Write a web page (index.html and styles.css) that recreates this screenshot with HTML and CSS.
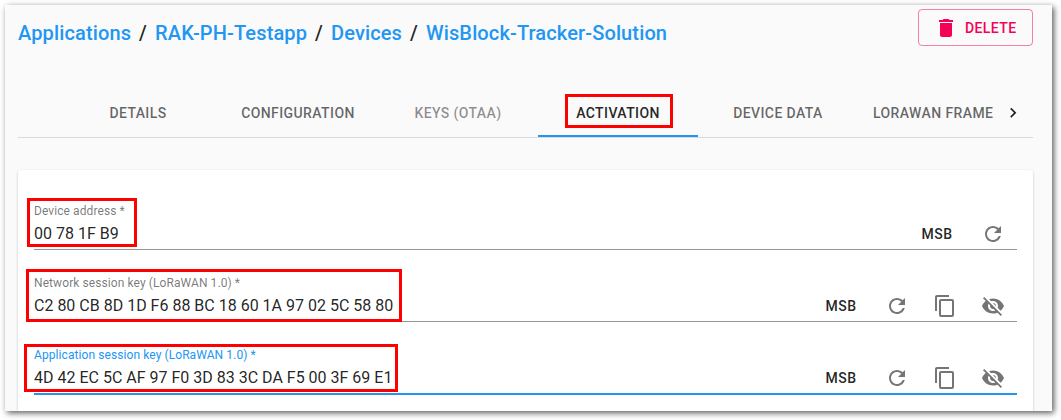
FILE: index.html
```html
<!DOCTYPE html>
<html lang="en">
<head>
<meta charset="utf-8">
<title>WisBlock-Tracker-Solution</title>
<link rel="stylesheet" href="styles.css">
</head>
<body>
<svg class="defs" aria-hidden="true">
  <symbol id="refresh" viewBox="0 0 24 24"><path d="M17.65 6.35C16.2 4.9 14.21 4 12 4c-4.42 0-7.99 3.58-7.99 8s3.57 8 7.99 8c3.73 0 6.84-2.55 7.73-6h-2.08c-.82 2.33-3.04 4-5.65 4-3.31 0-6-2.69-6-6s2.69-6 6-6c1.66 0 3.14.69 4.22 1.78L13 11h7V4l-2.35 2.35z"/></symbol>
  <symbol id="copy" viewBox="0 0 24 24"><path d="M16 1H4c-1.1 0-2 .9-2 2v14h2V3h12V1zm3 4H8c-1.1 0-2 .9-2 2v14c0 1.1.9 2 2 2h11c1.100 0 2-.9 2-2V7c0-1.100-.9-2-2-2zm0 16H8V7h11v14z"/></symbol>
  <symbol id="hidden" viewBox="0 0 24 24"><path d="M12 7c2.760 0 5 2.240 5 5 0 .650-.130 1.260-.360 1.830l2.920 2.920c1.510-1.260 2.700-2.890 3.430-4.750-1.730-4.390-6-7.500-11-7.500-1.400 0-2.740.250-3.980.700l2.160 2.160C10.740 7.130 11.350 7 12 7zM2 4.270l2.280 2.280.460.460C3.080 8.300 1.780 10.020 1 12c1.730 4.390 6 7.500 11 7.500 1.550 0 3.030-.300 4.380-.840l.420.420L19.730 22 21 20.730 3.270 3 2 4.270zM7.530 9.800l1.550 1.550c-.050.210-.080.430-.080.650 0 1.660 1.340 3 3 3 .220 0 .440-.030.650-.080l1.550 1.550c-.670.330-1.410.530-2.200.530-2.760 0-5-2.240-5-5 0-.790.200-1.530.530-2.200zm4.310-.780l3.150 3.150.020-.160c0-1.660-1.340-3-3-3l-.170.010z"/></symbol>
</svg>
<main class="frame">
  <header class="header">
    <nav class="crumbs">
      <a>Applications</a><span>/</span><a>RAK-PH-Testapp</a><span>/</span><a>Devices</a><span>/</span><a>WisBlock-Tracker-Solution</a>
    </nav>
    <button class="delete"><svg viewBox="0 0 24 24"><path d="M6 19c0 1.100.9 2 2 2h8c1.100 0 2-.9 2-2V7H6v12zM19 4h-3.500l-1-1h-5l-1 1H5v2h14V4z"/></svg>Delete</button>
  </header>
  <nav class="tabs">
    <div class="tab-list">
      <a class="tab">Details</a>
      <a class="tab">Configuration</a>
      <a class="tab disabled">Keys (OTAA)</a>
      <a class="tab active">Activation</a>
      <a class="tab">Device data</a>
      <a class="tab last">LoRaWAN frame</a>
    </div>
    <div class="scroll"><svg viewBox="0 0 24 24"><path d="M8.590 16.340l4.580-4.590-4.580-4.590L10 5.750l6 6-6 6z"/></svg></div>
  </nav>
  <section class="card">
    <div class="field">
      <label>Device address *</label>
      <div class="control"><span class="value">00 78 1F B9</span><b class="order">MSB</b><i class="icon"><svg><use href="#refresh"/></svg></i></div>
    </div>
    <div class="field">
      <label>Network session key (LoRaWAN 1.0) *</label>
      <div class="control"><span class="value">C2 80 CB 8D 1D F6 88 BC 18 60 1A 97 02 5C 58 80</span><b class="order">MSB</b><i class="icon"><svg><use href="#refresh"/></svg></i><i class="icon"><svg><use href="#copy"/></svg></i><i class="icon"><svg><use href="#hidden"/></svg></i></div>
    </div>
    <div class="field focused">
      <label>Application session key (LoRaWAN 1.0) *</label>
      <div class="control"><span class="value">4D 42 EC 5C AF 97 F0 3D 83 3C DA F5 00 3F 69 E1</span><b class="order">MSB</b><i class="icon"><svg><use href="#refresh"/></svg></i><i class="icon"><svg><use href="#copy"/></svg></i><i class="icon"><svg><use href="#hidden"/></svg></i></div>
    </div>
  </section>
</main>
<div class="mark mark-tab"></div>
<div class="mark mark-address"></div>
<div class="mark mark-network"></div>
<div class="mark mark-application"></div>
</body>
</html>
```
FILE: styles.css
```css
* { box-sizing: border-box; }
body {
  margin: 0;
  padding: 5px 9px 9px 5px;
  height: 420px;
  overflow: hidden;
  background: #fff;
  font-family: Roboto, "Liberation Sans", sans-serif;
  color: rgba(0, 0, 0, .87);
}
svg { display: block; width: 24px; height: 24px; fill: currentColor; }
.defs { display: none; }

.frame {
  height: 406px;
  padding: 4px 19px 0 13px;
  background: #fafafa;
  box-shadow: 2px 2px 6px rgba(0, 0, 0, .65);
}

.header { display: flex; justify-content: space-between; height: 80px; }
.crumbs {
  display: flex;
  height: 48px;
  align-items: center;
  font-size: 20px;
  font-weight: 500;
  letter-spacing: .0065em;
}
.crumbs a { color: #2196f3; }
.crumbs span { margin: 0 8px; }
.delete {
  display: flex;
  align-items: center;
  width: 115px;
  height: 37px;
  padding: 0 15px;
  border: 1px solid rgba(245, 0, 87, .5);
  border-radius: 4px;
  background: none;
  color: #f50057;
  font: 500 14px Roboto, sans-serif;
  letter-spacing: .02857em;
  text-transform: uppercase;
}
.delete svg { margin-right: 7px; }

.tabs { display: flex; height: 49px; padding-left: 40px; border-bottom: 1px solid #dadada; }
.tab-list { display: flex; flex: 1; min-width: 0; }
.tab {
  display: flex;
  flex: 0 0 160px;
  align-items: center;
  justify-content: center;
  border: solid transparent;
  border-width: 2px 0;
  font-size: 14px;
  font-weight: 500;
  letter-spacing: .02857em;
  text-transform: uppercase;
  white-space: nowrap;
  color: rgba(0, 0, 0, .6);
}
.tab.last { flex: 1; justify-content: flex-start; padding-left: 15px; }
.tab.disabled { color: rgba(0, 0, 0, .44); }
.tab.active { color: rgba(0, 0, 0, .87); border-bottom-color: #2196f3; }
.scroll { display: flex; width: 40px; align-items: center; justify-content: center; }
.scroll svg { width: 20px; height: 20px; }

.card {
  height: 241px;
  margin-top: 32px;
  padding: 32px 16px 0;
  background: #fff;
  border-radius: 4px 4px 0 0;
  box-shadow: 0 1px 3px rgba(0, 0, 0, .2), 0 1px 1px rgba(0, 0, 0, .1);
  clip-path: inset(-5px -5px 0 -5px);
}
.field { height: 72px; }
.field label {
  display: block;
  height: 16px;
  font-size: 12px;
  line-height: 18px;
  letter-spacing: .007em;
  color: rgba(0, 0, 0, .54);
}
.control {
  display: flex;
  align-items: center;
  height: 32px;
  border-bottom: 1px solid #949494;
}
.value { flex: 1; font-size: 16px; line-height: 19px; }
.order {
  width: 64px;
  text-align: center;
  font-size: 14px;
  font-weight: 500;
  letter-spacing: .02857em;
}
.icon { display: flex; width: 48px; justify-content: center; color: rgba(0, 0, 0, .54); }
.focused label { color: #2196f3; }
.focused .control { height: 33px; border-bottom: 2px solid #2196f3; }

.mark { position: absolute; border: 3px solid #f00; }
.mark-tab { left: 565px; top: 94px; width: 108px; height: 34px; }
.mark-address { left: 27px; top: 198px; width: 110px; height: 49px; }
.mark-network { left: 26px; top: 269px; width: 376px; height: 53px; }
.mark-application { left: 24px; top: 344px; width: 374px; height: 48px; }
```
